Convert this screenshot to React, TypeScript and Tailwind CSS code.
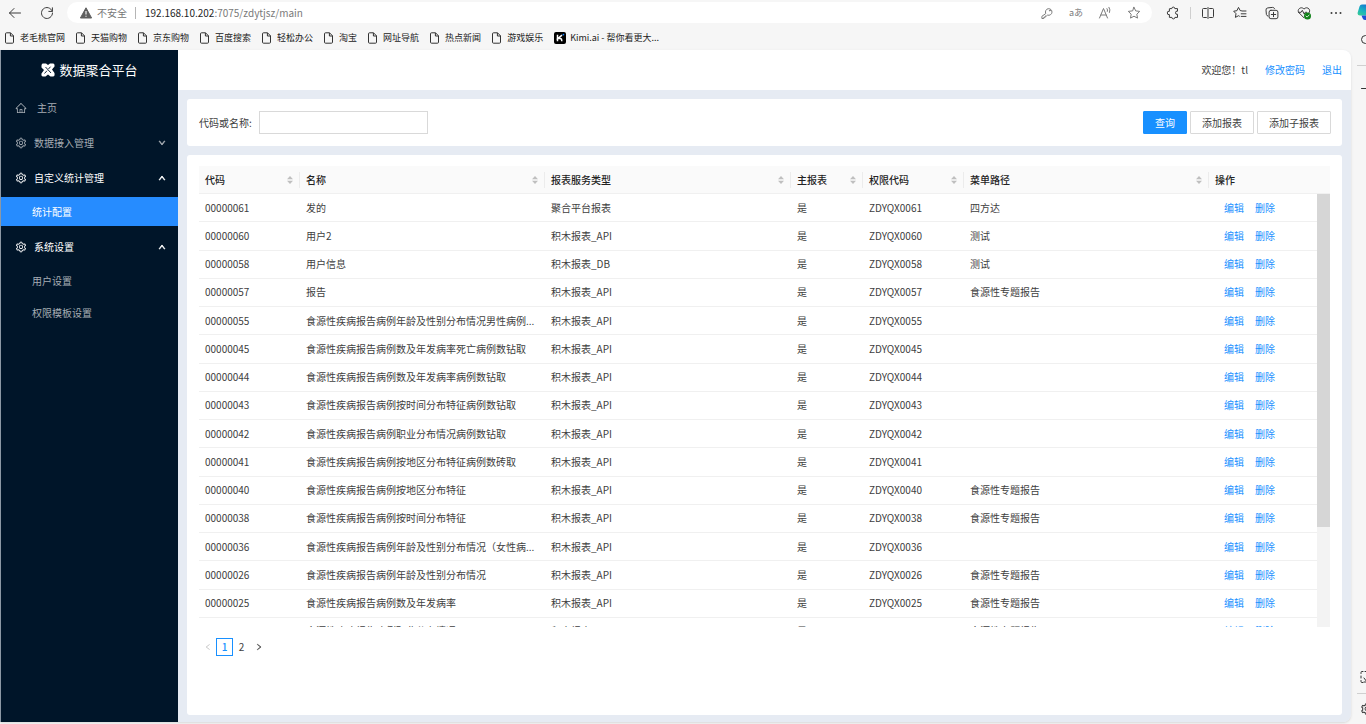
import { type ReactNode, useState } from 'react';
import {
  AiOutlineDown,
  AiOutlineHome,
  AiOutlineLeft,
  AiOutlineRight,
  AiOutlineSetting,
  AiOutlineUp
} from 'react-icons/ai';

interface ReportRow {
  readonly code: string;
  readonly name: string;
  readonly service?: string;
  readonly path?: string;
}

const API_SERVICE = '积木报表_API';
const FOODBORNE_PATH = '食源性专题报告';

const rows: readonly ReportRow[] = [
  { code: '0061', name: '发的', service: '聚合平台报表', path: '四方达' },
  { code: '0060', name: '用户2', path: '测试' },
  { code: '0058', name: '用户信息', service: '积木报表_DB', path: '测试' },
  { code: '0057', name: '报告', path: FOODBORNE_PATH },
  { code: '0055', name: '食源性疾病报告病例年龄及性别分布情况男性病例...' },
  { code: '0045', name: '食源性疾病报告病例数及年发病率死亡病例数钻取' },
  { code: '0044', name: '食源性疾病报告病例数及年发病率病例数钻取' },
  { code: '0043', name: '食源性疾病报告病例按时间分布特征病例数钻取' },
  { code: '0042', name: '食源性疾病报告病例职业分布情况病例数钻取' },
  { code: '0041', name: '食源性疾病报告病例按地区分布特征病例数砖取' },
  { code: '0040', name: '食源性疾病报告病例按地区分布特征', path: FOODBORNE_PATH },
  { code: '0038', name: '食源性疾病报告病例按时间分布特征', path: FOODBORNE_PATH },
  { code: '0036', name: '食源性疾病报告病例年龄及性别分布情况（女性病...' },
  { code: '0026', name: '食源性疾病报告病例年龄及性别分布情况', path: FOODBORNE_PATH },
  { code: '0025', name: '食源性疾病报告病例数及年发病率', path: FOODBORNE_PATH },
  { code: '0024', name: '食源性疾病报告病例职业分布情况', path: FOODBORNE_PATH }
];

const columns = [
  { title: '代码', width: 'w-[101px]', sortable: true },
  { title: '名称', width: 'w-[245px]', sortable: true },
  { title: '报表服务类型', width: 'w-[246px]', sortable: true },
  { title: '主报表', width: 'w-[72px]', sortable: true },
  { title: '权限代码', width: 'w-[101px]', sortable: true },
  { title: '菜单路径', width: 'w-[245px]', sortable: true },
  { title: '操作', width: 'w-[108px]', sortable: false }
];

const bookmarks = [
  '老毛桃官网',
  '天猫购物',
  '京东购物',
  '百度搜索',
  '轻松办公',
  '淘宝',
  '网址导航',
  '热点新闻',
  '游戏娱乐'
];

interface IconProps {
  readonly children: ReactNode;
}

function Icon({ children }: IconProps) {
  return (
    <svg
      aria-hidden="true"
      className="size-[14px] shrink-0"
      fill="none"
      stroke="currentColor"
      strokeLinecap="round"
      strokeLinejoin="round"
      strokeWidth="1"
      viewBox="0 0 14 14"
    >
      {children}
    </svg>
  );
}

interface IconButtonProps {
  readonly label: string;
  readonly children: ReactNode;
}

function IconButton({ label, children }: IconButtonProps) {
  return (
    <button type="button" aria-label={label} className="flex items-center">
      {children}
    </button>
  );
}

function BrowserToolbar() {
  return (
    <div className="flex h-[25px] items-center pl-2 text-[#3b3b3b]">
      <div className="flex items-center gap-[18px]">
        <IconButton label="返回">
          <Icon>
            <path d="M12.5 7h-11M6 2.5 1.5 7 6 11.5" />
          </Icon>
        </IconButton>
        <IconButton label="刷新">
          <Icon>
            <path d="M12.2 5.2A5.5 5.5 0 1 0 12.5 7M12.4 1.8v3.6H8.8" />
          </Icon>
        </IconButton>
      </div>
      <div className="ml-[13px] flex h-[21px] flex-1 items-center rounded-full bg-white pr-[11px] pl-[13px] text-[10px]">
        <svg aria-hidden="true" className="size-3 shrink-0" viewBox="0 0 12 12">
          <path
            d="M6 .8 11.6 11H.4Z"
            fill="#5f5f5f"
            stroke="#5f5f5f"
            strokeLinejoin="round"
          />
          <path d="M6 4v3.5M6 8.7v1.1" stroke="#fff" strokeWidth="1.1" />
        </svg>
        <span className="ml-[5px] text-[#757575]">不安全</span>
        <span className="ml-2 h-3 w-px bg-[#b5b5b5]" />
        <span className="ml-[9px] text-[#7a7a7a]">
          <span className="text-[#1f1f1f]">192.168.10.202</span>
          :7075/zdytjsz/main
        </span>
        <div className="ml-auto flex items-center gap-[15px] text-[#7b7b7b]">
          <IconButton label="密码">
            <Icon>
              <path d="M5.6 7.2a3.3 3.3 0 1 1 2 1.900L6.400 10H5.200v1.300H3.800v1.200H1.900v-1.800Z" />
              <circle cx="9.8" cy="4.6" r=".4" />
            </Icon>
          </IconButton>
          <button type="button" aria-label="翻译" className="w-[14px] text-[9px] whitespace-nowrap">
            aあ
          </button>
          <IconButton label="朗读">
            <Icon>
              <path d="M1.5 12 5.5 2.5 9.5 12M2.9 9h5.2M9 2.6q1 1.300.4 2.800M11 1.300q1.700 2.500.5 5.200" />
            </Icon>
          </IconButton>
          <IconButton label="收藏此页">
            <Icon>
              <path d="m7 1.300 1.700 3.600 4 .5-2.900 2.800.7 3.900L7 10.200l-3.500 1.900.7-3.900L1.300 5.400l4-.5Z" />
            </Icon>
          </IconButton>
        </div>
      </div>
      <div className="flex items-center pr-2 pl-[14px]">
        <IconButton label="扩展">
          <Icon>
            <path d="M4 2.600h1.800a1.500 1.500 0 0 1 3 0h2.700v2.600a1.600 1.600 0 1 0 0 3.100v3.100H8.900a1.500 1.500 0 0 1-3 0H3.400V8.600a1.700 1.700 0 1 1 0-3.300V3.200Z" />
          </Icon>
        </IconButton>
        <span className="mx-[10px] h-3 w-px bg-[#cfcfcf]" />
        <div className="flex items-center gap-[18px]">
          <IconButton label="拆分屏幕">
            <Icon>
              <path d="M5.400 2.500H2.500a1 1 0 0 0-1 1v7a1 1 0 0 0 1 1h2.900M8.600 2.500h2.900a1 1 0 0 1 1 1v7a1 1 0 0 1-1 1H8.600M7 1.500v11" />
            </Icon>
          </IconButton>
          <IconButton label="收藏夹">
            <Icon>
              <path d="M8.300 4.700 7.200 4.600 5.500 1.400 3.900 4.700.7 5.200 3 7.700l-.6 3.700 3.100-1.700.9.500M9 5h4M8.200 7.800H13M8.200 10.400H13" />
            </Icon>
          </IconButton>
          <IconButton label="集锦">
            <Icon>
              <path d="M2.900 10.100A2 2 0 0 1 1.400 8.500L1 4.100a2 2 0 0 1 1.800-2.200L7.500 1.400a2 2 0 0 1 2 1.100" />
              <rect x="4.1" y="4.3" width="8.8" height="8.4" rx="1.8" />
              <path d="M8.500 6.300v4.400M6.300 8.500h4.400" />
            </Icon>
          </IconButton>
          <IconButton label="浏览器概要">
            <Icon>
              <path d="M7 11.800 2 6.800C-.7 3.600 4.200-.3 7 3.100c2.800-3.400 7.700.5 5 3.700M1.500 6.300h2.600l1.200-2 1.900 3.800 1-1.800h1.400" />
              <circle cx="10.5" cy="10" r="3.5" fill="#13831b" stroke="none" />
              <path d="m9 10 1.100 1.100 2-2.100" stroke="#fff" strokeWidth=".8" />
            </Icon>
          </IconButton>
          <IconButton label="设置及其他">
            <Icon>
              <g fill="currentColor" stroke="none">
                <circle cx="2.5" cy="7" r="1" />
                <circle cx="7" cy="7" r="1" />
                <circle cx="11.5" cy="7" r="1" />
              </g>
            </Icon>
          </IconButton>
        </div>
      </div>
    </div>
  );
}

function BookmarkBar() {
  return (
    <nav
      aria-label="书签"
      className="flex h-[25px] items-center gap-[11px] overflow-hidden pl-[5px] text-[9px] whitespace-nowrap text-[#222]"
    >
      {bookmarks.map((bookmark) => (
        <a key={bookmark} href="#" className="flex items-center gap-[6px]">
          <svg
            aria-hidden="true"
            className="h-3 w-[9px] shrink-0"
            fill="none"
            stroke="#333"
            strokeLinejoin="round"
            viewBox="0 0 9 12"
          >
            <path d="M1.500.8h4l3 3v6.400a1 1 0 0 1-1 1h-6a1 1 0 0 1-1-1V1.800a1 1 0 0 1 1-1ZM5.400.8V4h3.100" />
          </svg>
          {bookmark}
        </a>
      ))}
      <a href="#" className="flex items-center gap-1">
        <svg aria-hidden="true" className="size-3 shrink-0" viewBox="0 0 12 12">
          <rect width="12" height="12" rx="2" fill="#000" />
          <path d="M3.500 2.800v6.400M8 3.200 4 6.500h2.200q1.600 0 1.600 2.700" fill="none" stroke="#fff" strokeWidth="1.5" />
          <circle cx="9.4" cy="2.6" r=".9" fill="#1783ff" />
        </svg>
        Kimi.ai - 帮你看更大...
      </a>
    </nav>
  );
}

function BrowserSidebar() {
  return (
    <aside className="flex w-[15px] shrink-0 flex-col overflow-hidden pt-1 pl-[6px] text-[#333]">
      <svg aria-hidden="true" className="size-[17px] shrink-0" viewBox="0 0 17 17">
        <defs>
          <linearGradient id="assistant" x1="0" y1="1" x2=".6" y2="0">
            <stop offset="0" stopColor="#3ccf8e" />
            <stop offset=".5" stopColor="#19b3c0" />
            <stop offset="1" stopColor="#1479d0" />
          </linearGradient>
        </defs>
        <path d="M5 .5h8v11H3Q0 11.500.7 8.500L2.500 2.500Q3 .5 5 .5Z" fill="url(#assistant)" />
        <path d="M4.500 11.500h9V16H8q-2 0-2.500-2Z" fill="#1d4fd7" />
      </svg>
      <div className="mt-[12px] pl-[3px]">
        <Icon>
          <circle cx="5.5" cy="6.5" r="4" />
          <path d="m9 10 3 3" />
        </Icon>
      </div>
      <div className="mt-[18px] h-px shrink-0 bg-[#d0d0d0]" />
      <div className="mt-[15px] pl-[3px]">
        <Icon>
          <path d="M1.500 7.500h11M7 2v11" />
        </Icon>
      </div>
      <div className="mt-auto pl-[3px]">
        <Icon>
          <path d="M3 1.500H2a1 1 0 0 0-1 1v1M1 6v2M1 10.500v1a1 1 0 0 0 1 1h1M5 1.500h2M4 8l3 4v-3M7 12H4" />
        </Icon>
      </div>
      <div className="mt-[9px] h-px shrink-0 bg-[#d0d0d0]" />
      <div className="mt-[8px] mb-2 pl-[3px]">
        <AiOutlineSetting className="size-[14px]" />
      </div>
    </aside>
  );
}

interface MenuButtonProps {
  readonly label: string;
  readonly isOpen: boolean;
  readonly onToggle: () => void;
}

function MenuButton({ label, isOpen, onToggle }: MenuButtonProps) {
  const Arrow = isOpen ? AiOutlineUp : AiOutlineDown;

  return (
    <button
      type="button"
      aria-expanded={isOpen}
      className={`flex h-[29px] w-full items-center pr-3 pl-[14px] ${isOpen ? 'text-white' : 'text-[#a6adb4]'}`}
      onClick={onToggle}
    >
      <AiOutlineSetting className="size-3" />
      <span className="ml-[7px]">{label}</span>
      <Arrow className="ml-auto size-2" stroke="currentColor" strokeWidth="100" />
    </button>
  );
}

function SideMenu() {
  const [open, setOpen] = useState({ access: false, custom: true, system: true });

  const toggle = (key: keyof typeof open) =>
    setOpen((current) => ({ ...current, [key]: !current[key] }));

  return (
    <aside className="w-[177px] shrink-0 bg-[#001529] text-[10px]">
      <div className="flex h-10 items-center justify-center gap-1 text-[13px] text-white">
        <svg aria-hidden="true" className="size-[14px]" viewBox="0 0 14 14">
          <path
            d="M2 .5H5L7 2 9 .5h3Q13.800.5 13.500 3.500L11 6.500l2.500 3.500Q14 13.500 12 13.500H9.500L7 11.500 4.500 13.500H2Q0 13.500.5 10.500L3 7 .5 4.500Q.2.500 2 .5Z"
            fill="#fff"
          />
          <path d="M4.500 4 10 10M9.500 3.700 7.500 6M6 7.700 3.500 10.500" stroke="#001529" strokeWidth=".9" />
        </svg>
        <h1>数据聚合平台</h1>
      </div>
      <nav aria-label="主菜单">
        <ul className="flex flex-col gap-[6px] pt-[3px] text-[#a6adb4]">
          <li>
            <a href="#" className="flex h-[29px] items-center gap-[10px] pl-[14px]">
              <AiOutlineHome className="size-3" />
              主页
            </a>
          </li>
          <li>
            <MenuButton label="数据接入管理" isOpen={open.access} onToggle={() => toggle('access')} />
          </li>
          <li>
            <MenuButton label="自定义统计管理" isOpen={open.custom} onToggle={() => toggle('custom')} />
            {open.custom && (
              <ul className="mt-[5px]">
                <li>
                  <a
                    href="#"
                    aria-current="page"
                    className="flex h-[29px] items-center bg-[#268cff] pl-[31px] text-white"
                  >
                    统计配置
                  </a>
                </li>
              </ul>
            )}
          </li>
          <li>
            <MenuButton label="系统设置" isOpen={open.system} onToggle={() => toggle('system')} />
            {open.system && (
              <ul className="mt-[5px] flex flex-col gap-[3px]">
                <li>
                  <a href="#" className="flex h-[29px] items-center pl-[31px]">
                    用户设置
                  </a>
                </li>
                <li>
                  <a href="#" className="flex h-[29px] items-center pl-[31px]">
                    权限模板设置
                  </a>
                </li>
              </ul>
            )}
          </li>
        </ul>
      </nav>
    </aside>
  );
}

function SearchPanel() {
  const [keyword, setKeyword] = useState('');

  return (
    <form
      className="flex items-center rounded-[3px] bg-white py-3 pr-[11px] pl-3"
      onSubmit={(event) => event.preventDefault()}
    >
      <label htmlFor="keyword" className="w-[60px] shrink-0 whitespace-nowrap">
        代码或名称:
      </label>
      <input
        id="keyword"
        type="text"
        className="h-[23px] w-[169px] border border-[#d9d9d9] px-2 outline-none focus:border-[#1890ff]"
        value={keyword}
        onChange={(event) => setKeyword(event.target.value)}
      />
      <div className="ml-auto flex gap-[3px]">
        <button
          type="submit"
          className="h-[23px] rounded-[1px] border border-[#1890ff] bg-[#1890ff] px-[11px] text-white"
        >
          查询
        </button>
        <button type="button" className="h-[23px] rounded-[1px] border border-[#d9d9d9] px-[11px]">
          添加报表
        </button>
        <button type="button" className="h-[23px] rounded-[1px] border border-[#d9d9d9] px-[11px]">
          添加子报表
        </button>
      </div>
    </form>
  );
}

function SortIcon() {
  return (
    <svg aria-hidden="true" className="h-2 w-[6px]" fill="#bfbfbf" viewBox="0 0 6 8">
      <path d="M3 0 6 3.300H0ZM3 8 0 4.700h6Z" />
    </svg>
  );
}

function ReportTable() {
  return (
    <div className="flex">
      <div className="h-[461px] min-w-0 flex-1 overflow-y-auto [scrollbar-width:none]">
        <table className="h-[480px] w-full table-fixed border-separate border-spacing-0 text-left">
          <thead className="sticky top-0">
            <tr>
              {columns.map(({ title, width, sortable }) => (
                <th
                  key={title}
                  scope="col"
                  className={`h-7 border-b border-[#f0f0f0] bg-[#fafafa] pl-[6px] font-medium text-[#222] ${width}`}
                >
                  <div
                    className={`flex h-4 items-center justify-between pr-[6px] ${sortable ? 'border-r border-[#ececec]' : ''}`}
                  >
                    {title}
                    {sortable && <SortIcon />}
                  </div>
                </th>
              ))}
            </tr>
          </thead>
          <tbody className="[&_td]:h-7 [&_td]:border-b [&_td]:border-[#f0f0f0] [&_td]:px-[6px] [&_td]:whitespace-nowrap">
            {rows.map(({ code, name, service = API_SERVICE, path }) => (
              <tr key={code}>
                <td>0000{code}</td>
                <td>{name}</td>
                <td>{service}</td>
                <td>是</td>
                <td>ZDYQX{code}</td>
                <td>{path}</td>
                <td>
                  <div className="flex gap-[11px] pl-[9px] text-[#1890ff]">
                    <a href="#">编辑</a>
                    <a href="#">删除</a>
                  </div>
                </td>
              </tr>
            ))}
          </tbody>
        </table>
      </div>
      <div className="flex w-[13px] shrink-0 flex-col">
        <div className="h-7 border-b border-[#f0f0f0] bg-[#fafafa]" />
        <div className="flex-1 bg-[#f3f3f3]">
          <div className="h-[77%] bg-[#d6d6d6]" />
        </div>
      </div>
    </div>
  );
}

function Pagination() {
  const [page, setPage] = useState(1);

  return (
    <nav aria-label="分页" className="mt-[11px] flex">
      <button
        type="button"
        aria-label="上一页"
        className="flex h-[18px] w-[17px] items-center justify-center disabled:text-[#bfbfbf]"
        disabled={page === 1}
        onClick={() => setPage(page - 1)}
      >
        <AiOutlineLeft className="size-2" />
      </button>
      {[1, 2].map((value) => (
        <button
          key={value}
          type="button"
          className={`flex h-[18px] w-[17px] items-center justify-center border ${
            value === page ? 'border-[#1890ff] font-medium text-[#1890ff]' : 'border-transparent'
          }`}
          onClick={() => setPage(value)}
        >
          {value}
        </button>
      ))}
      <button
        type="button"
        aria-label="下一页"
        className="flex h-[18px] w-[17px] items-center justify-center disabled:text-[#bfbfbf]"
        disabled={page === 2}
        onClick={() => setPage(page + 1)}
      >
        <AiOutlineRight className="size-2" stroke="currentColor" strokeWidth="40" />
      </button>
    </nav>
  );
}

export default function App() {
  return (
    <div className="flex min-h-screen bg-[#f6f6f6] font-['Noto_Sans_CJK_SC',sans-serif] text-[10px] leading-4 text-[#404040]">
      <div className="flex min-w-0 flex-1 flex-col">
        <BrowserToolbar />
        <BookmarkBar />
        <div className="mb-[2px] flex flex-1 overflow-hidden rounded-tr-lg rounded-br-lg border-l border-[#8c98a4] shadow-sm">
          <SideMenu />
          <div className="flex min-w-0 flex-1 flex-col bg-[#e6ebf3]">
            <header className="flex h-10 items-center justify-end gap-[17px] bg-white pr-[9px]">
              <span>欢迎您！tl</span>
              <a href="#" className="text-[#1890ff]">
                修改密码
              </a>
              <a href="#" className="text-[#1890ff]">
                退出
              </a>
            </header>
            <main className="flex flex-1 flex-col gap-[9px] px-[9px] pt-[9px] pb-[7px]">
              <SearchPanel />
              <section className="flex-1 rounded-[3px] bg-white px-3 pt-[11px] pb-3">
                <ReportTable />
                <Pagination />
              </section>
            </main>
          </div>
        </div>
      </div>
      <BrowserSidebar />
    </div>
  );
}
